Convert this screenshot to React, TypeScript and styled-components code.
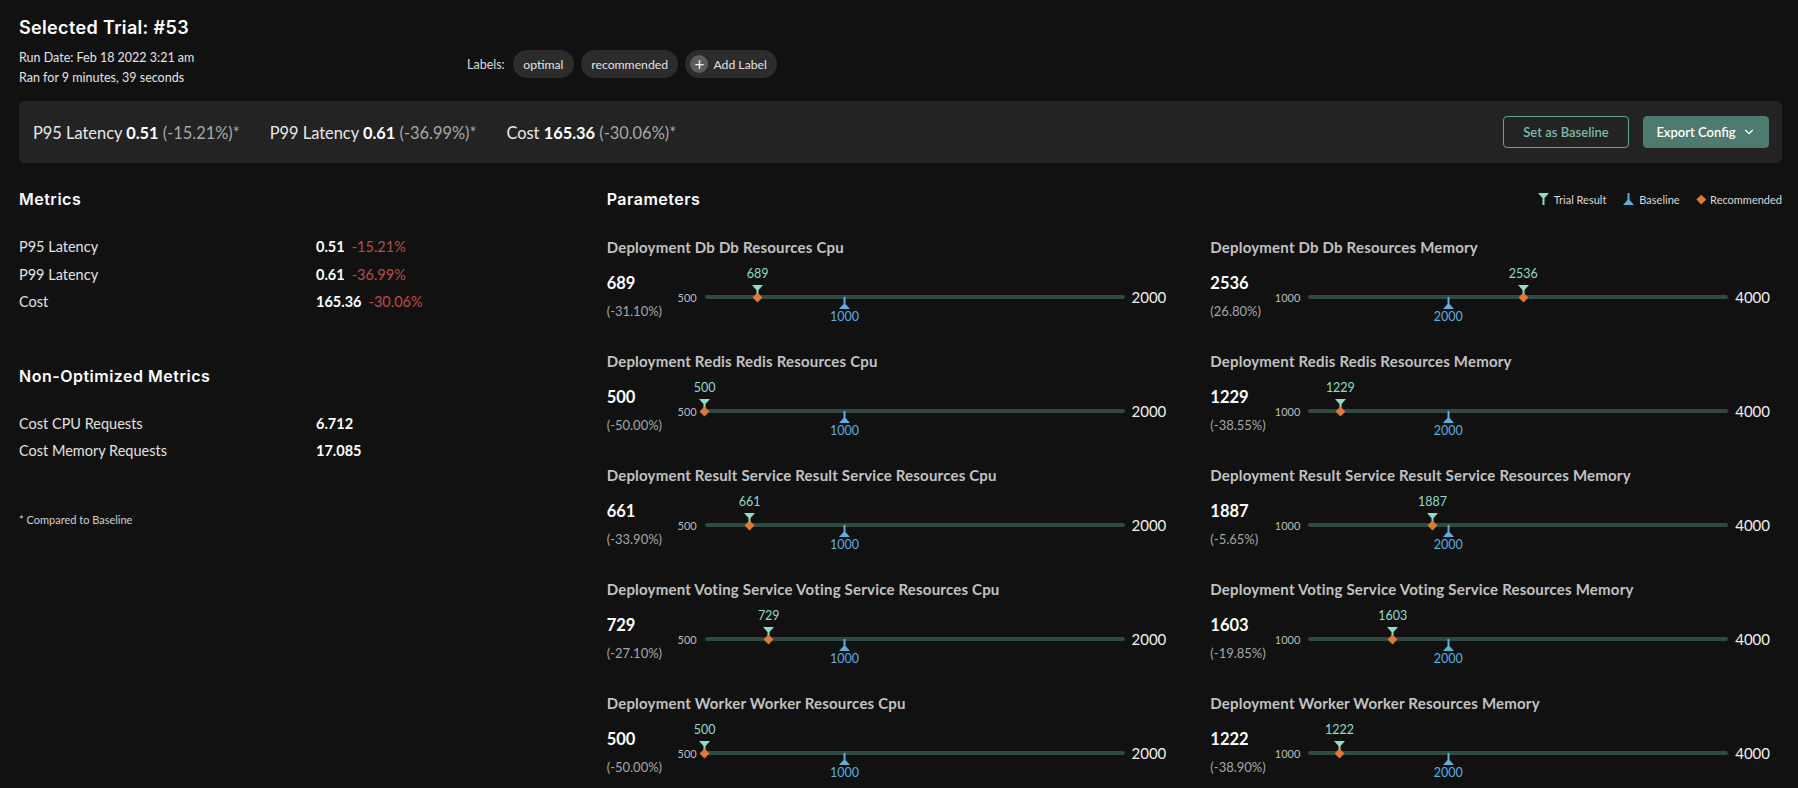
import React from "react";
import styled, { createGlobalStyle } from "styled-components";
import { ChevronDown } from "lucide-react";

const GlobalStyle = createGlobalStyle`
  html, body {
    margin: 0;
    padding: 0;
    background: #111111;
  }
  body {
    font-family: Lato, "Liberation Sans", sans-serif;
    color: #e6e6e6;
  }
  * {
    box-sizing: border-box;
  }
`;

const Page = styled.div`
  min-height: 788px;
  padding: 16px 16px 0 19px;
  background: #111111;
`;

const Title = styled.h1`
  margin: 0;
  font-family: Inter, "Noto Sans", sans-serif;
  font-size: 18px;
  font-weight: 600;
  letter-spacing: 0.35px;
  line-height: 24px;
  color: #ffffff;
`;

const HeaderRow = styled.div`
  display: flex;
  align-items: flex-start;
  margin-top: 8px;
`;

const RunInfo = styled.div`
  width: 448px;
  font-size: 12.5px;
  line-height: 20px;
  color: #e4e4e4;
`;

const Labels = styled.div`
  display: flex;
  align-items: center;
  gap: 7px;
  margin-top: 2px;
`;

const LabelsCaption = styled.span`
  font-size: 12.5px;
  color: #dcdcdc;
  margin-right: 1px;
`;

const Chip = styled.span<{ $add?: boolean }>`
  display: inline-flex;
  align-items: center;
  gap: 5px;
  height: 28px;
  padding: ${(p) => (p.$add ? "0 10.5px 0 5px" : "0 10.5px")};
  border-radius: 14px;
  background: #2c2c2c;
  font-size: 12.2px;
  color: #e2e2e2;
`;

const PlusDot = styled.span`
  display: inline-flex;
  align-items: center;
  justify-content: center;
  width: 18px;
  height: 18px;
  border-radius: 50%;
  background: #5c5c5c;
  color: #f0f0f0;
  font-size: 17px;
  line-height: 1;
`;

const SummaryBar = styled.div`
  display: flex;
  align-items: center;
  height: 62px;
  margin-top: 13px;
  padding: 0 13px 0 14px;
  border-radius: 6px;
  background: #232323;
`;

const SummaryItems = styled.div`
  display: flex;
  gap: 30px;
  flex: 1;
  font-size: 16.4px;
`;

const SummaryItem = styled.span`
  color: #e8e8e8;
  white-space: nowrap;
  b {
    font-weight: 700;
    color: #ffffff;
  }
  em {
    font-style: normal;
    color: #a8a8a8;
  }
`;

const Button = styled.button<{ $primary?: boolean }>`
  display: inline-flex;
  align-items: center;
  justify-content: center;
  gap: 6px;
  width: 126px;
  height: 32px;
  margin-left: 14px;
  border-radius: 4px;
  font-family: Lato, "Liberation Sans", sans-serif;
  font-size: 13px;
  font-weight: 600;
  cursor: pointer;
  border: 1px solid ${(p) => (p.$primary ? "#4f7a70" : "#5fa595")};
  background: ${(p) => (p.$primary ? "#4f7a70" : "transparent")};
  color: ${(p) => (p.$primary ? "#ffffff" : "#7db8aa")};
`;

const Main = styled.div`
  display: grid;
  grid-template-columns: 1fr 2fr;
  margin-top: 24px;
`;

const SectionHead = styled.div<{ $gap?: number }>`
  display: flex;
  align-items: center;
  justify-content: space-between;
  height: 24px;
  margin-top: ${(p) => p.$gap ?? 0}px;
`;

const SectionTitle = styled.h2`
  margin: 0;
  font-family: Inter, "Noto Sans", sans-serif;
  font-size: 16px;
  font-weight: 600;
  letter-spacing: 0.5px;
  line-height: 24px;
  color: #ffffff;
`;

const MetricGrid = styled.div`
  display: grid;
  grid-template-columns: 297px 1fr;
  margin-top: 22px;
  font-size: 14.5px;
  line-height: 27.5px;
`;

const MetricName = styled.span`
  color: #e2e2e2;
`;

const MetricValue = styled.span`
  font-weight: 700;
  color: #ffffff;
`;

const MetricChange = styled.span`
  margin-left: 7px;
  color: #bf4b48;
`;

const Footnote = styled.div`
  margin-top: 47px;
  font-size: 11px;
  line-height: 16px;
  color: #d0d0d0;
`;

const Legend = styled.div`
  display: flex;
  align-items: center;
  gap: 17px;
  font-size: 11px;
  color: #dadada;
`;

const LegendItem = styled.span`
  display: inline-flex;
  align-items: center;
  gap: 5px;
`;

const ParamGrid = styled.div`
  display: grid;
  grid-template-columns: 1fr 1fr;
  column-gap: 32px;
  row-gap: 24px;
  margin-top: 26px;
`;

const ParamTitle = styled.div`
  font-size: 15px;
  font-weight: 700;
  letter-spacing: 0.2px;
  line-height: 20px;
  white-space: nowrap;
  color: #c2c2c2;
`;

const SliderRow = styled.div`
  display: flex;
  align-items: center;
  height: 60px;
  margin-top: 10px;
  padding-right: 12px;
`;

const ValueBlock = styled.div`
  display: flex;
  flex-direction: column;
  gap: 6px;
  width: 64px;
`;

const Value = styled.span`
  font-size: 16.5px;
  font-weight: 700;
  line-height: 22px;
  color: #ffffff;
`;

const Change = styled.span`
  font-size: 13px;
  line-height: 22px;
  color: #a6a6a6;
`;

const MinLabel = styled.span`
  width: 34px;
  padding-right: 8px;
  text-align: right;
  font-size: 11px;
  color: #bdbdbd;
`;

const MaxLabel = styled.span`
  margin-left: 7px;
  font-size: 15px;
  color: #f0f0f0;
`;

const Track = styled.div`
  position: relative;
  flex: 1;
  height: 4px;
  border-radius: 2px;
  background: #2e4a42;
`;

const Pin = styled.div`
  position: absolute;
  top: 50%;
  width: 0;
  height: 0;
`;

const MarkerLabel = styled.span<{ $below?: boolean }>`
  position: absolute;
  left: 0;
  transform: translateX(-50%);
  font-size: 12.5px;
  line-height: 14px;
  white-space: nowrap;
  color: ${(p) => (p.$below ? "#5aaee0" : "#8fdcc9")};
  ${(p) => (p.$below ? "top: 13px;" : "bottom: 16px;")}
`;

const MarkerSvg = styled.svg<{ $below?: boolean }>`
  position: absolute;
  left: -5.5px;
  ${(p) => (p.$below ? "top: 0;" : "bottom: 0;")}
`;

const Diamond = styled.span`
  position: absolute;
  left: -3.5px;
  top: -3.5px;
  width: 7px;
  height: 7px;
  background: #e07a2e;
  transform: rotate(45deg);
`;

const TrialIcon = ({ size = 12 }: { size?: number }) => (
  <svg width={(size * 11) / 12} height={size} viewBox="0 0 11 12">
    <polygon points="0,0 11,0 6.5,5 6.5,12 4.5,12 4.5,5" fill="#8fdcc9" />
  </svg>
);

const BaselineIcon = ({ size = 12 }: { size?: number }) => (
  <svg width={(size * 11) / 12} height={size} viewBox="0 0 11 12">
    <polygon points="4.5,0 6.5,0 6.5,7 11,12 0,12 4.5,7" fill="#5aaee0" />
  </svg>
);

const LegendDiamond = styled.span`
  display: inline-block;
  width: 6.5px;
  height: 6.5px;
  margin: 0 1px;
  background: #e07a2e;
  transform: rotate(45deg);
`;

type Param = {
  name: string;
  value: number;
  change: string;
  min: number;
  max: number;
  baseline: number;
};

const cpu = { min: 500, max: 2000, baseline: 1000 };
const mem = { min: 1000, max: 4000, baseline: 2000 };

const params: Param[] = [
  { name: "Deployment Db Db Resources Cpu", value: 689, change: "(-31.10%)", ...cpu },
  { name: "Deployment Db Db Resources Memory", value: 2536, change: "(26.80%)", ...mem },
  { name: "Deployment Redis Redis Resources Cpu", value: 500, change: "(-50.00%)", ...cpu },
  { name: "Deployment Redis Redis Resources Memory", value: 1229, change: "(-38.55%)", ...mem },
  { name: "Deployment Result Service Result Service Resources Cpu", value: 661, change: "(-33.90%)", ...cpu },
  { name: "Deployment Result Service Result Service Resources Memory", value: 1887, change: "(-5.65%)", ...mem },
  { name: "Deployment Voting Service Voting Service Resources Cpu", value: 729, change: "(-27.10%)", ...cpu },
  { name: "Deployment Voting Service Voting Service Resources Memory", value: 1603, change: "(-19.85%)", ...mem },
  { name: "Deployment Worker Worker Resources Cpu", value: 500, change: "(-50.00%)", ...cpu },
  { name: "Deployment Worker Worker Resources Memory", value: 1222, change: "(-38.90%)", ...mem },
];

const pct = (v: number, p: Param) => `${((v - p.min) / (p.max - p.min)) * 100}%`;

const ParamSlider = ({ p }: { p: Param }) => (
  <div>
    <ParamTitle>{p.name}</ParamTitle>
    <SliderRow>
      <ValueBlock>
        <Value>{p.value}</Value>
        <Change>{p.change}</Change>
      </ValueBlock>
      <MinLabel>{p.min}</MinLabel>
      <Track>
        <Pin style={{ left: pct(p.baseline, p) }}>
          <MarkerSvg $below width="11" height="12" viewBox="0 0 11 12">
            <polygon points="4.5,0 6.5,0 6.5,7 11,12 0,12 4.5,7" fill="#5aaee0" />
          </MarkerSvg>
          <MarkerLabel $below>{p.baseline}</MarkerLabel>
        </Pin>
        <Pin style={{ left: pct(p.value, p) }}>
          <MarkerLabel>{p.value}</MarkerLabel>
          <MarkerSvg width="11" height="12" viewBox="0 0 11 12">
            <polygon points="0,0 11,0 6.5,5 6.5,12 4.5,12 4.5,5" fill="#8fdcc9" />
          </MarkerSvg>
          <Diamond />
        </Pin>
      </Track>
      <MaxLabel>{p.max}</MaxLabel>
    </SliderRow>
  </div>
);

export default function App() {
  return (
    <Page>
      <GlobalStyle />
      <Title>Selected Trial: #53</Title>
      <HeaderRow>
        <RunInfo>
          <div>Run Date: Feb 18 2022 3:21 am</div>
          <div>Ran for 9 minutes, 39 seconds</div>
        </RunInfo>
        <Labels>
          <LabelsCaption>Labels:</LabelsCaption>
          <Chip>optimal</Chip>
          <Chip>recommended</Chip>
          <Chip $add>
            <PlusDot>+</PlusDot>
            Add Label
          </Chip>
        </Labels>
      </HeaderRow>

      <SummaryBar>
        <SummaryItems>
          <SummaryItem>
            P95 Latency <b>0.51</b> <em>(-15.21%)*</em>
          </SummaryItem>
          <SummaryItem>
            P99 Latency <b>0.61</b> <em>(-36.99%)*</em>
          </SummaryItem>
          <SummaryItem>
            Cost <b>165.36</b> <em>(-30.06%)*</em>
          </SummaryItem>
        </SummaryItems>
        <Button>Set as Baseline</Button>
        <Button $primary>
          Export Config <ChevronDown size={14} strokeWidth={2} />
        </Button>
      </SummaryBar>

      <Main>
        <div>
          <SectionHead>
            <SectionTitle>Metrics</SectionTitle>
          </SectionHead>
          <MetricGrid>
            <MetricName>P95 Latency</MetricName>
            <span>
              <MetricValue>0.51</MetricValue>
              <MetricChange>-15.21%</MetricChange>
            </span>
            <MetricName>P99 Latency</MetricName>
            <span>
              <MetricValue>0.61</MetricValue>
              <MetricChange>-36.99%</MetricChange>
            </span>
            <MetricName>Cost</MetricName>
            <span>
              <MetricValue>165.36</MetricValue>
              <MetricChange>-30.06%</MetricChange>
            </span>
          </MetricGrid>

          <SectionHead $gap={48}>
            <SectionTitle>Non-Optimized Metrics</SectionTitle>
          </SectionHead>
          <MetricGrid>
            <MetricName>Cost CPU Requests</MetricName>
            <MetricValue>6.712</MetricValue>
            <MetricName>Cost Memory Requests</MetricName>
            <MetricValue>17.085</MetricValue>
          </MetricGrid>

          <Footnote>* Compared to Baseline</Footnote>
        </div>

        <div>
          <SectionHead>
            <SectionTitle>Parameters</SectionTitle>
            <Legend>
              <LegendItem>
                <TrialIcon />
                Trial Result
              </LegendItem>
              <LegendItem>
                <BaselineIcon />
                Baseline
              </LegendItem>
              <LegendItem>
                <LegendDiamond />
                Recommended
              </LegendItem>
            </Legend>
          </SectionHead>
          <ParamGrid>
            {params.map((p) => (
              <ParamSlider key={p.name} p={p} />
            ))}
          </ParamGrid>
        </div>
      </Main>
    </Page>
  );
}
